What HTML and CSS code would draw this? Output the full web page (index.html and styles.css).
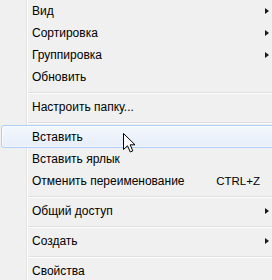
FILE: index.html
```html
<!DOCTYPE html>
<html lang="ru">
<head>
<meta charset="utf-8">
<title>Меню</title>
<link rel="stylesheet" href="styles.css">
</head>
<body>
<div class="menu">
  <div class="item"><span class="label">Вид</span><span class="arrow"></span></div>
  <div class="item"><span class="label">Сортировка</span><span class="arrow"></span></div>
  <div class="item"><span class="label">Группировка</span><span class="arrow"></span></div>
  <div class="item"><span class="label">Обновить</span></div>
  <div class="sep"><div class="line"></div></div>
  <div class="item"><span class="label">Настроить папку...</span></div>
  <div class="sep"><div class="line"></div></div>
  <div class="item hot"><span class="label">Вставить</span></div>
  <div class="item"><span class="label">Вставить ярлык</span></div>
  <div class="item"><span class="label">Отменить переименование</span><span class="shortcut">CTRL+Z</span></div>
  <div class="sep"><div class="line"></div></div>
  <div class="item"><span class="label">Общий доступ</span><span class="arrow"></span></div>
  <div class="sep"><div class="line"></div></div>
  <div class="item"><span class="label">Создать</span><span class="arrow"></span></div>
  <div class="sep"><div class="line"></div></div>
  <div class="item"><span class="label">Свойства</span></div>
  <svg class="cursor" width="14" height="21" viewBox="0 0 14 21" aria-hidden="true">
    <path d="M0.5 0.5 V16.5 L4.5 12.8 L7.3 19 L9.8 17.9 L7.2 11.8 H12 Z" fill="#fff" stroke="#000" stroke-width="1" stroke-linejoin="miter"/>
  </svg>
</div>
</body>
</html>
```
FILE: styles.css
```css
html, body {
  margin: 0;
  padding: 0;
  background: #f0f0f0;
}

.menu {
  position: relative;
  width: 272px;
  height: 280px;
  overflow: hidden;
  font-family: "Liberation Sans", Arial, sans-serif;
  font-size: 12px;
  color: #000;
  background: linear-gradient(to right, #f0f0f0 26px, #e2e3e3 26px, #e2e3e3 27px, #ffffff 27px, #ffffff 28px, #f0f0f0 28px);
}

.item {
  position: relative;
  height: 22px;
  line-height: 22px;
  padding-left: 32px;
  padding-right: 3px;
  display: flex;
  align-items: center;
  justify-content: space-between;
}

.label {
  position: relative;
  white-space: nowrap;
}

.arrow {
  width: 0;
  height: 0;
  border-top: 3.5px solid transparent;
  border-bottom: 3.5px solid transparent;
  border-left: 4px solid #1a1a1a;
}

.shortcut {
  position: relative;
  margin-right: 9px;
  white-space: nowrap;
  font-size: 11.5px;
}

.hot::before {
  content: "";
  position: absolute;
  left: 1px;
  right: -4px;
  top: -1px;
  bottom: 0;
  border: 1px solid #aecff7;
  border-radius: 3px;
  background: linear-gradient(#f3f7fd, #e7eefa);
  box-shadow: inset 0 0 0 1px rgba(255, 255, 255, 0.55);
}

.sep {
  height: 8px;
  padding-top: 4px;
  box-sizing: border-box;
  padding-left: 28px;
}

.line {
  height: 1px;
  background: #e0e0e0;
  border-bottom: 1px solid #ffffff;
}

.cursor {
  position: absolute;
  left: 123px;
  top: 133px;
}
```
